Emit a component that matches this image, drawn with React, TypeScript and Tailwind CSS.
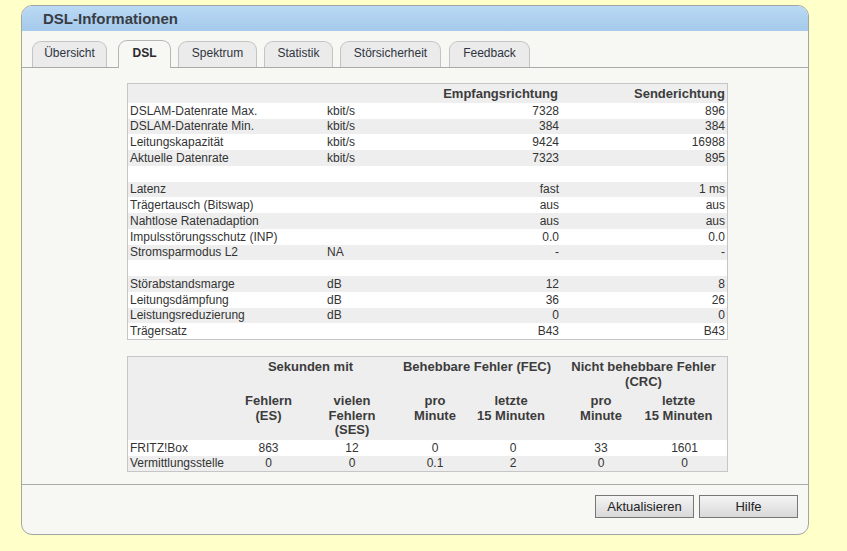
import React from "react";

const rows1: ([string, string, string, string] | null)[] = [
  ["DSLAM-Datenrate Max.", "kbit/s", "7328", "896"],
  ["DSLAM-Datenrate Min.", "kbit/s", "384", "384"],
  ["Leitungskapazität", "kbit/s", "9424", "16988"],
  ["Aktuelle Datenrate", "kbit/s", "7323", "895"],
  null,
  ["Latenz", "", "fast", "1 ms"],
  ["Trägertausch (Bitswap)", "", "aus", "aus"],
  ["Nahtlose Ratenadaption", "", "aus", "aus"],
  ["Impulsstörungsschutz (INP)", "", "0.0", "0.0"],
  ["Stromsparmodus L2", "NA", "-", "-"],
  null,
  ["Störabstandsmarge", "dB", "12", "8"],
  ["Leitungsdämpfung", "dB", "36", "26"],
  ["Leistungsreduzierung", "dB", "0", "0"],
  ["Trägersatz", "", "B43", "B43"],
];

const tabs = [
  { label: "Übersicht", w: "w-[75px]", ml: "ml-[10px]" },
  { label: "DSL", w: "w-[53px]", ml: "ml-[11px]", active: true },
  { label: "Spektrum", w: "w-[79px]", ml: "ml-[7px]" },
  { label: "Statistik", w: "w-[69px]", ml: "ml-[7px]" },
  { label: "Störsicherheit", w: "w-[101px]", ml: "ml-[7px]" },
  { label: "Feedback", w: "w-[81px]", ml: "ml-[8px]" },
];

const rows2 = [
  ["FRITZ!Box", "863", "12", "0", "0", "33", "1601"],
  ["Vermittlungsstelle", "0", "0", "0.1", "2", "0", "0"],
];

export default function App() {
  return (
    <div
      className="w-[847px] min-h-[551px] bg-[#ffffc9] pt-[5px] pl-[21px] text-[#333333]"
      style={{ fontFamily: '"Liberation Sans", Arial, sans-serif' }}
    >
      <div className="w-[788px] h-[530px] rounded-[11px] border border-[#a2a6a2] bg-[#f7f7f4] flex flex-col overflow-hidden">
        {/* Header */}
        <div className="h-[25px] shrink-0 bg-linear-to-b from-[#bad9f4] to-[#a5caeb] flex items-center pl-[21px]">
          <span className="text-[15px] font-bold text-[#383d45] leading-none">DSL-Informationen</span>
        </div>
        {/* Tabs */}
        <div className="h-[37px] shrink-0 flex items-end border-b border-[#a9aba9]">
          {tabs.map((t) =>
            t.active ? (
              <div
                key={t.label}
                className={`${t.w} ${t.ml} h-[28px] -mb-px relative z-10 rounded-t-[9px] border border-b-0 border-[#b5b5b5] bg-[#f7f7f4] flex items-center justify-center pb-[4px] text-[12px] font-bold text-[#2b2b2b]`}
              >
                {t.label}
              </div>
            ) : (
              <div
                key={t.label}
                className={`${t.w} ${t.ml} h-[26px] rounded-t-[9px] border border-b-0 border-[#c4c4c4] bg-[#ebebeb] flex items-center justify-center pb-[3px] text-[12px] text-[#2e3440]`}
              >
                {t.label}
              </div>
            )
          )}
        </div>
        {/* Content */}
        <div className="flex-1 pt-[15px] pl-[105px]">
          {/* Table 1 */}
          <div className="w-[601px] border border-[#c6c6c6] text-[12px]">
            <div className="h-[18.75px] bg-[#eeeeee] flex items-center text-[13px] font-bold text-[#3c3c3c]">
              <div className="w-[197px]" />
              <div className="w-[100px]" />
              <div className="w-[136px] text-right pr-[3px]">Empfangsrichtung</div>
              <div className="flex-1 text-right pr-[2px]">Senderichtung</div>
            </div>
            {rows1.map((r, i) => (
              <div
                key={i}
                className={`h-[15.75px] flex items-center leading-none ${i % 2 === 0 ? "bg-white" : "bg-[#eeeeee]"}`}
              >
                {r && (
                  <>
                    <div className="w-[197px] pl-[2px]">{r[0]}</div>
                    <div className="w-[100px] pl-[2px]">{r[1]}</div>
                    <div className="w-[136px] text-right pr-[2px]">{r[2]}</div>
                    <div className="flex-1 text-right pr-[2px]">{r[3]}</div>
                  </>
                )}
              </div>
            ))}
          </div>
          {/* Table 2 */}
          <div className="w-[601px] mt-[16px] border border-[#c6c6c6] text-[12px]">
            <div className="bg-[#eeeeee] text-[13px] font-bold text-[#3c3c3c] leading-[15px]">
              <div className="h-[35px] grid grid-cols-[99px_167px_166px_167px] text-center pt-[2px]">
                <div />
                <div>Sekunden mit</div>
                <div>Behebbare Fehler (FEC)</div>
                <div>
                  Nicht behebbare Fehler
                  <br />
                  (CRC)
                </div>
              </div>
              <div className="h-[48px] grid grid-cols-[99px_83px_84px_82px_84px_82px_85px] text-center leading-[14.5px] pt-[2px]">
                <div />
                <div>
                  Fehlern
                  <br />
                  (ES)
                </div>
                <div>
                  vielen
                  <br />
                  Fehlern
                  <br />
                  (SES)
                </div>
                <div>
                  pro
                  <br />
                  Minute
                </div>
                <div className="pr-[14px]">
                  letzte
                  <br />
                  15 Minuten
                </div>
                <div>
                  pro
                  <br />
                  Minute
                </div>
                <div className="pr-[12px]">
                  letzte
                  <br />
                  15 Minuten
                </div>
              </div>
            </div>
            {rows2.map((r, i) => (
              <div
                key={i}
                className={`h-[15.5px] grid grid-cols-[99px_83px_84px_82px_84px_82px_85px] items-center leading-none ${i % 2 === 0 ? "bg-white" : "bg-[#eeeeee]"}`}
              >
                <div className="pl-[2px] whitespace-nowrap">{r[0]}</div>
                {r.slice(1).map((v, j) => (
                  <div key={j} className={`text-center ${j === 3 ? "pr-[10px]" : ""}`}>
                    {v}
                  </div>
                ))}
              </div>
            ))}
          </div>
        </div>
        {/* Footer */}
        <div className="h-[50px] shrink-0 border-t border-[#a9aba9] flex justify-end items-start pt-[10px] pr-[10px] gap-[5px]">
          <button className="w-[99px] h-[23px] border border-[#777777] bg-linear-to-b from-[#f4f4f4] to-[#d9d9d9] text-[13px] text-[#222222] leading-none">
            Aktualisieren
          </button>
          <button className="w-[99px] h-[23px] border border-[#777777] bg-linear-to-b from-[#f4f4f4] to-[#d9d9d9] text-[13px] text-[#222222] leading-none">
            Hilfe
          </button>
        </div>
      </div>
    </div>
  );
}
